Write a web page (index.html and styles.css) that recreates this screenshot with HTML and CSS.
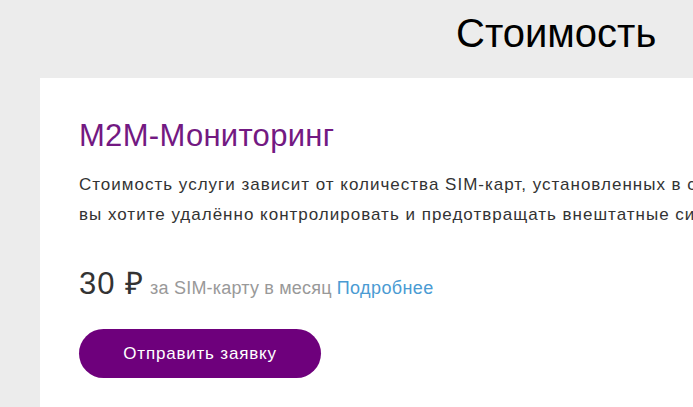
FILE: index.html
```html
<!DOCTYPE html>
<html lang="ru">
<head>
    <meta charset="UTF-8">
    <title>Стоимость</title>
    <link rel="stylesheet" href="styles.css">
</head>
<body>
<div id="page">
    <div id="head">
        <h1>Стоимость</h1>
    </div>
    <div id="card">
        <h2>M2M-Мониторинг</h2>
        <p class="desc">Стоимость услуги зависит от количества SIM-карт, установленных в системе, если<br>вы хотите удалённо контролировать и предотвращать внештатные ситуации.</p>
        <div class="price">
            <span class="sum">30 ₽</span>
            <span class="unit">за SIM-карту в месяц</span>
            <a href="#" class="more">Подробнее</a>
        </div>
        <a href="#" class="btn">Отправить заявку</a>
    </div>
</div>
</body>
</html>
```

FILE: styles.css
```css
* {
    margin: 0;
    padding: 0;
}

a {
    text-decoration: none;
}

html, body {
    height: 100%;
    overflow: hidden;
}

body {
    background: #ececec;
    font-family: "Liberation Sans", Arial, sans-serif;
    color: #333;
}

#page {
    width: 1100px;
}

#head {
    height: 78px;
    padding-left: 456px;
}

#head h1 {
    font-weight: normal;
    font-size: 40px;
    line-height: 1;
    padding-top: 13px;
    color: #000;
}

#card {
    margin-left: 40px;
    background: #fff;
    padding: 40px 39px 40px;
    min-height: 400px;
}

#card h2 {
    font-weight: normal;
    font-size: 31px;
    line-height: 36px;
    color: #731982;
    letter-spacing: 0.3px;
}

.desc {
    margin-top: 16px;
    font-size: 17px;
    line-height: 30px;
    letter-spacing: 1px;
    white-space: nowrap;
    color: #333;
}

.price {
    margin-top: 36px;
    display: flex;
    align-items: baseline;
    line-height: 36px;
}

.sum {
    font-size: 31px;
    letter-spacing: 1px;
    color: #333;
    margin-right: 6px;
}

.unit {
    font-size: 18px;
    color: #999;
    margin-right: 5px;
    letter-spacing: 0.2px;
}

.more {
    font-size: 18px;
    color: #4a9bd3;
    letter-spacing: 0.4px;
}

.btn {
    display: inline-block;
    margin-top: 23px;
    width: 242px;
    height: 49px;
    line-height: 49px;
    border-radius: 25px;
    background: #6e007c;
    color: #fff;
    font-size: 17px;
    text-align: center;
    letter-spacing: 0.8px;
}
```
